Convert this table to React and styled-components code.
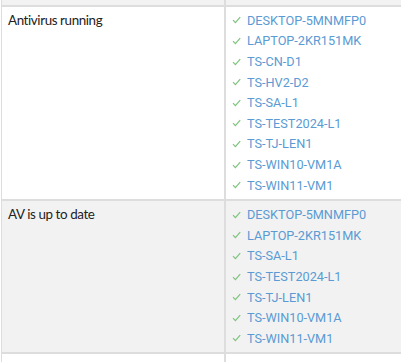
import React from 'react';
import styled, { createGlobalStyle } from 'styled-components';

const GlobalStyle = createGlobalStyle`
  html, body {
    margin: 0;
    padding: 0;
    background: #fff;
    overflow: hidden;
  }
  body {
    font-family: 'Lato', 'Noto Sans', sans-serif;
    color: #222;
  }
`;

const Table = styled.div`
  margin-top: -23px;
  margin-left: 1px;
  border-left: 1px solid #dddddd;
`;

const Row = styled.div`
  display: grid;
  grid-template-columns: 224px 1fr;
  background: ${({ $shaded }) => ($shaded ? '#f2f2f2' : '#fff')};
  border-bottom: 2px solid #dddddd;
`;

const LabelCell = styled.div`
  padding: 3px 6px;
  font-size: 13.4px;
  letter-spacing: -0.4px;
  line-height: 20px;
  border-right: 2px solid #dddddd;
`;

const ValueCell = styled.div`
  padding: 3.5px 6px;
`;

const HostList = styled.ul`
  list-style: none;
  margin: 0;
  padding: 0;
`;

const Host = styled.li`
  display: flex;
  align-items: center;
  gap: 6px;
  height: 20.6px;
  font-family: 'Roboto', sans-serif;
  font-size: 12.7px;
  color: #5a9bd4;
`;

const Check = () => (
  <svg width="9" height="8" viewBox="0 0 9 8" fill="none">
    <path d="M1 4.2 L3.4 6.6 L8.2 1.2" stroke="#7cc47c" strokeWidth="1.2" />
  </svg>
);

const rows = [
  { label: '', hosts: ['x'], shaded: true },
  {
    label: 'Antivirus running',
    hosts: [
      'DESKTOP-5MNMFP0',
      'LAPTOP-2KR151MK',
      'TS-CN-D1',
      'TS-HV2-D2',
      'TS-SA-L1',
      'TS-TEST2024-L1',
      'TS-TJ-LEN1',
      'TS-WIN10-VM1A',
      'TS-WIN11-VM1',
    ],
  },
  {
    label: 'AV is up to date',
    shaded: true,
    hosts: [
      'DESKTOP-5MNMFP0',
      'LAPTOP-2KR151MK',
      'TS-SA-L1',
      'TS-TEST2024-L1',
      'TS-TJ-LEN1',
      'TS-WIN10-VM1A',
      'TS-WIN11-VM1',
    ],
  },
  { label: '', hosts: ['x'] },
];

export default function App() {
  return (
    <>
      <GlobalStyle />
      <Table>
        {rows.map((row, i) => (
          <Row key={i} $shaded={row.shaded}>
            <LabelCell>{row.label}</LabelCell>
            <ValueCell>
              <HostList>
                {row.hosts.map((h) =>
                  h === 'x' ? (
                    <Host key={h} />
                  ) : (
                    <Host key={h}>
                      <Check />
                      {h}
                    </Host>
                  )
                )}
              </HostList>
            </ValueCell>
          </Row>
        ))}
      </Table>
    </>
  );
}
